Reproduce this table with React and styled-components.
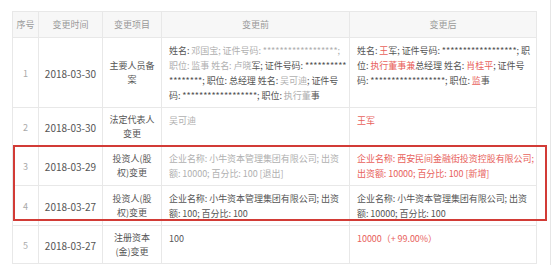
import React from "react";
import styled, { createGlobalStyle } from "styled-components";

const GlobalStyle = createGlobalStyle`
  html, body {
    margin: 0;
    padding: 0;
    background: #fff;
    font-family: "Noto Sans CJK SC", "Noto Sans", sans-serif;
  }
`;

const Page = styled.div`
  width: 551px;
  height: 265px;
  box-sizing: border-box;
  border-right: 1px solid #e6e6e6;
  padding: 11px 0 0 12px;
  overflow: hidden;
`;

const TableWrap = styled.div`
  position: relative;
  width: 519px;
`;

const Table = styled.table`
  width: 519px;
  border-collapse: collapse;
  table-layout: fixed;
  font-size: 9px;
  line-height: 15px;
`;

const HeadCell = styled.th`
  width: ${props => props.w}px;
  height: 25px;
  padding: 0;
  background: #f7f7f7;
  border: 1px solid #e8e8e8;
  color: #9a9a9a;
  font-weight: normal;
  font-size: 9px;
  text-align: center;
`;

const Cell = styled.td`
  border: 1px solid #e8e8e8;
  padding: 5px 6px 4px;
  color: ${props => (props.muted ? "#aaa" : "#555")};
  font-size: ${props => props.size || 9}px;
  line-height: ${props => props.lh || 15}px;
  text-align: ${props => (props.center ? "center" : "left")};
  vertical-align: ${props => (props.top ? "top" : "middle")};
  white-space: ${props => (props.nowrap ? "nowrap" : "normal")};
  word-break: break-all;
`;

const DateCell = styled(Cell)`
  padding-left: 0;
  padding-right: 0;
`;

const ChangeCell = styled(Cell)`
  padding: 5px 1px 4px 7px;
  letter-spacing: -0.05px;
`;

const Seg = styled.span`
  color: ${props =>
    props.tone === "red" ? "#e8625c" : props.tone === "light" ? "#b0b0b0" : "#555"};
`;

const Marker = styled.div`
  position: absolute;
  left: 1px;
  top: 134px;
  width: 534px;
  height: 76px;
  box-sizing: border-box;
  border: 2px solid #d23b36;
  pointer-events: none;
`;

const STARS = "******************";

const rows = [
  {
    no: 1,
    date: "2018-03-30",
    item: "主要人员备案",
    before: [
      ["姓名: ", "dark"],
      ["邓国宝; 证件号码: " + STARS + "; 职位: 监事 姓名: 卢晓", "light"],
      ["军; 证件号码: " + STARS + "; 职位: 总经理 姓名: ", "dark"],
      ["吴可迪", "light"],
      ["; 证件号码: " + STARS + "; 职位: ", "dark"],
      ["执行董", "light"],
      ["事", "dark"],
    ],
    after: [
      ["姓名: ", "dark"],
      ["王", "red"],
      ["军; 证件号码: " + STARS + "; 职位: ", "dark"],
      ["执行董事兼", "red"],
      ["总经理 姓名: ", "dark"],
      ["肖桂平", "red"],
      ["; 证件号码: " + STARS + "; 职位: ", "dark"],
      ["监", "red"],
      ["事", "dark"],
    ],
  },
  {
    no: 2,
    date: "2018-03-30",
    item: "法定代表人变更",
    before: [["吴可迪", "light"]],
    after: [["王军", "red"]],
  },
  {
    no: 3,
    date: "2018-03-29",
    item: "投资人(股权)变更",
    before: [["企业名称: 小牛资本管理集团有限公司; 出资额: 10000; 百分比: 100 [退出]", "light"]],
    after: [["企业名称: 西安民间金融街投资控股有限公司; 出资额: 10000; 百分比: 100 [新增]", "red"]],
  },
  {
    no: 4,
    date: "2018-03-27",
    item: "投资人(股权)变更",
    before: [["企业名称: 小牛资本管理集团有限公司; 出资额: 100; 百分比: 100", "dark"]],
    after: [["企业名称: 小牛资本管理集团有限公司; 出资额: 10000; 百分比: 100", "dark"]],
  },
  {
    no: 5,
    date: "2018-03-27",
    item: "注册资本(金)变更",
    before: [["100", "dark"]],
    after: [["10000（+ 99.00%）", "red"]],
  },
];

const Diff = ({ parts }) =>
  parts.map(([text, tone], i) => (
    <Seg key={i} tone={tone}>
      {text}
    </Seg>
  ));

export default function App() {
  return (
    <Page>
      <GlobalStyle />
      <TableWrap>
        <Table>
          <thead>
            <tr>
              <HeadCell w={25}>序号</HeadCell>
              <HeadCell w={63}>变更时间</HeadCell>
              <HeadCell w={58}>变更项目</HeadCell>
              <HeadCell w={187}>变更前</HeadCell>
              <HeadCell w={186}>变更后</HeadCell>
            </tr>
          </thead>
          <tbody>
            {rows.map(r => (
              <tr key={r.no}>
                <Cell center muted>{r.no}</Cell>
                <DateCell center nowrap size={10}>{r.date}</DateCell>
                <Cell center lh={14}>{r.item}</Cell>
                <ChangeCell top><Diff parts={r.before} /></ChangeCell>
                <ChangeCell top><Diff parts={r.after} /></ChangeCell>
              </tr>
            ))}
          </tbody>
        </Table>
        {/* highlight box around the shareholder changes */}
        <Marker />
      </TableWrap>
    </Page>
  );
}
